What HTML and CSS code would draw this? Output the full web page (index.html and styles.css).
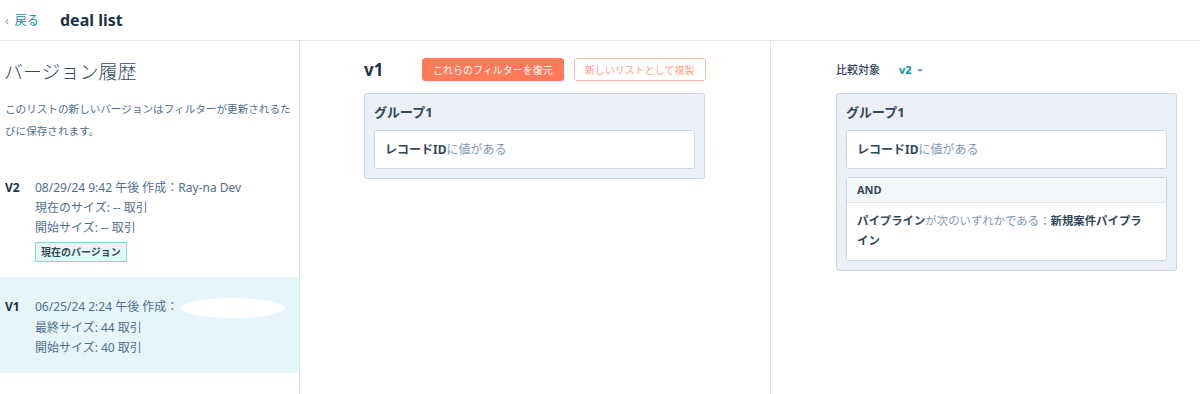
FILE: index.html
```html
<!DOCTYPE html>
<html lang="ja">
<head>
    <meta charset="UTF-8">
    <title>deal list</title>
    <link rel="stylesheet" href="styles.css">
</head>
<body>
    <!-- ヘッダー -->
    <div class="top-bar">
        <a class="back-link" href="#"><span class="chev">‹</span>戻る</a>
        <h1 class="page-title">deal list</h1>
    </div>

    <div class="layout">
        <!-- バージョン一覧 -->
        <div class="side">
            <h2 class="side-title">バージョン履歴</h2>
            <p class="side-desc">このリストの新しいバージョンはフィルターが更新されるたびに保存されます。</p>

            <div class="version">
                <div class="version-tag">V2</div>
                <div class="version-info">
                    <div>08/29/24 9:42 午後 作成：Ray-na Dev</div>
                    <div>現在のサイズ: -- 取引</div>
                    <div>開始サイズ: -- 取引</div>
                    <span class="badge">現在のバージョン</span>
                </div>
            </div>

            <div class="version selected">
                <div class="version-tag">V1</div>
                <div class="version-info">
                    <div>06/25/24 2:24 午後 作成：<span class="blot"></span></div>
                    <div>最終サイズ: 44 取引</div>
                    <div>開始サイズ: 40 取引</div>
                </div>
            </div>
        </div>

        <!-- 選択中のバージョン -->
        <div class="panel">
            <div class="panel-head">
                <span class="ver-name">v1</span>
                <button class="btn primary">これらのフィルターを復元</button>
                <button class="btn ghost">新しいリストとして複製</button>
            </div>
            <div class="group">
                <div class="group-title">グループ1</div>
                <div class="rule"><b>レコードID</b>に値がある</div>
            </div>
        </div>

        <!-- 比較対象 -->
        <div class="panel compare">
            <div class="panel-head">
                <span class="compare-label">比較対象</span>
                <span class="compare-pick">v2 <span class="caret"></span></span>
            </div>
            <div class="group">
                <div class="group-title">グループ1</div>
                <div class="rule"><b>レコードID</b>に値がある</div>
                <div class="rule and-rule">
                    <div class="and-head">AND</div>
                    <div class="and-body"><b>パイプライン</b>が次のいずれかである：<b>新規案件パイプライン</b></div>
                </div>
            </div>
        </div>
    </div>
</body>
</html>
```

FILE: styles.css
```css
body {
    margin: 0;
    background: #fff;
    color: #33475b;
    font-family: "Noto Sans", "Noto Sans CJK JP", sans-serif;
    overflow: hidden;
}

/* ヘッダー */
.top-bar {
    display: flex;
    align-items: center;
    height: 40px;
    padding-left: 5px;
    border-bottom: 1px solid #dfe3eb;
}

.back-link {
    color: #0091ae;
    font-size: 12px;
    text-decoration: none;
    width: 55px;
}

.back-link .chev {
    color: #7c98b6;
    margin-right: 6px;
}

.page-title {
    margin: 0;
    font-size: 16px;
    font-weight: 700;
    color: #213343;
}

.layout {
    display: flex;
    height: 353px;
}

/* 左側 */
.side {
    width: 299px;
    border-right: 1px solid #dfe3eb;
}

.side-title {
    margin: 15px 0 0 4px;
    font-size: 19px;
    font-weight: 300;
    line-height: 32px;
    color: #33475b;
}

.side-desc {
    margin: 10px 0 0 5px;
    font-size: 10.6px;
    line-height: 22px;
    color: #516f90;
}

.version {
    display: flex;
    padding: 8px 0 15px 5px;
    margin-top: 28px;
    font-size: 12px;
    line-height: 20px;
    color: #516f90;
}

.version.selected {
    margin-top: 0;
    padding: 20px 0 15px 5px;
    background: #e5f5f8;
}

.version-tag {
    width: 30px;
    font-weight: 700;
    color: #213343;
}

.badge {
    display: inline-block;
    margin-top: 4px;
    padding: 0 5px;
    height: 20px;
    line-height: 18px;
    font-size: 10px;
    font-weight: 700;
    color: #33475b;
    background: #e5f8f6;
    border: 1px solid #7fded2;
    box-sizing: border-box;
    vertical-align: top;
}

.blot {
    display: inline-block;
    width: 105px;
    height: 20px;
    vertical-align: middle;
    background: #fff;
    border-radius: 50%;
    margin-left: 2px;
}

/* 右側パネル */
.panel {
    width: 406px;
    padding: 17px 0 0 64px;
    border-right: 1px solid #dfe3eb;
}

.panel.compare {
    border-right: none;
    padding-left: 65px;
    width: 340px;
}

.panel-head {
    display: flex;
    align-items: center;
    height: 22px;
    margin-bottom: 13px;
}

.ver-name {
    width: 58px;
    font-size: 17px;
    font-weight: 700;
    color: #213343;
}

.btn {
    height: 23px;
    padding: 0 10px;
    font-family: inherit;
    font-size: 10px;
    border-radius: 3px;
    margin-right: 10px;
}

.btn.primary {
    background: #ff7a59;
    color: #fff;
    border: 1px solid #ff7a59;
}

.btn.ghost {
    background: #fff;
    color: #ff9f8a;
    border: 1px solid #ffbcac;
}

.compare-label {
    width: 63px;
    font-size: 11px;
    font-weight: 500;
    color: #33475b;
}

.compare-pick {
    font-size: 11px;
    font-weight: 700;
    color: #0091ae;
}

.caret {
    display: inline-block;
    margin-left: 3px;
    vertical-align: 2px;
    border-left: 3px solid transparent;
    border-right: 3px solid transparent;
    border-top: 3px solid #7c98b6;
}

.group {
    width: 341px;
    box-sizing: border-box;
    background: #eaf0f6;
    border: 1px solid #cbd6e2;
    border-radius: 3px;
    padding: 0 9px 9px;
}

.group-title {
    height: 36px;
    line-height: 36px;
    font-size: 13px;
    font-weight: 700;
    color: #33475b;
}

.rule {
    background: #fff;
    border: 1px solid #cbd6e2;
    border-radius: 3px;
    padding: 0 10px;
    height: 39px;
    box-sizing: border-box;
    line-height: 37px;
    font-size: 12px;
    color: #7c98b6;
}

.rule b {
    color: #33475b;
    font-weight: 700;
}

.and-rule {
    height: auto;
    margin-top: 8px;
    padding: 0;
    line-height: 20px;
}

.and-head {
    height: 24px;
    line-height: 24px;
    padding: 0 10px;
    background: #f5f8fa;
    border-bottom: 1px solid #dfe3eb;
    font-size: 11px;
    font-weight: 700;
    color: #33475b;
}

.and-body {
    padding: 8px 20px 9px 10px;
    font-size: 11.4px;
    line-height: 20px;
}
```
